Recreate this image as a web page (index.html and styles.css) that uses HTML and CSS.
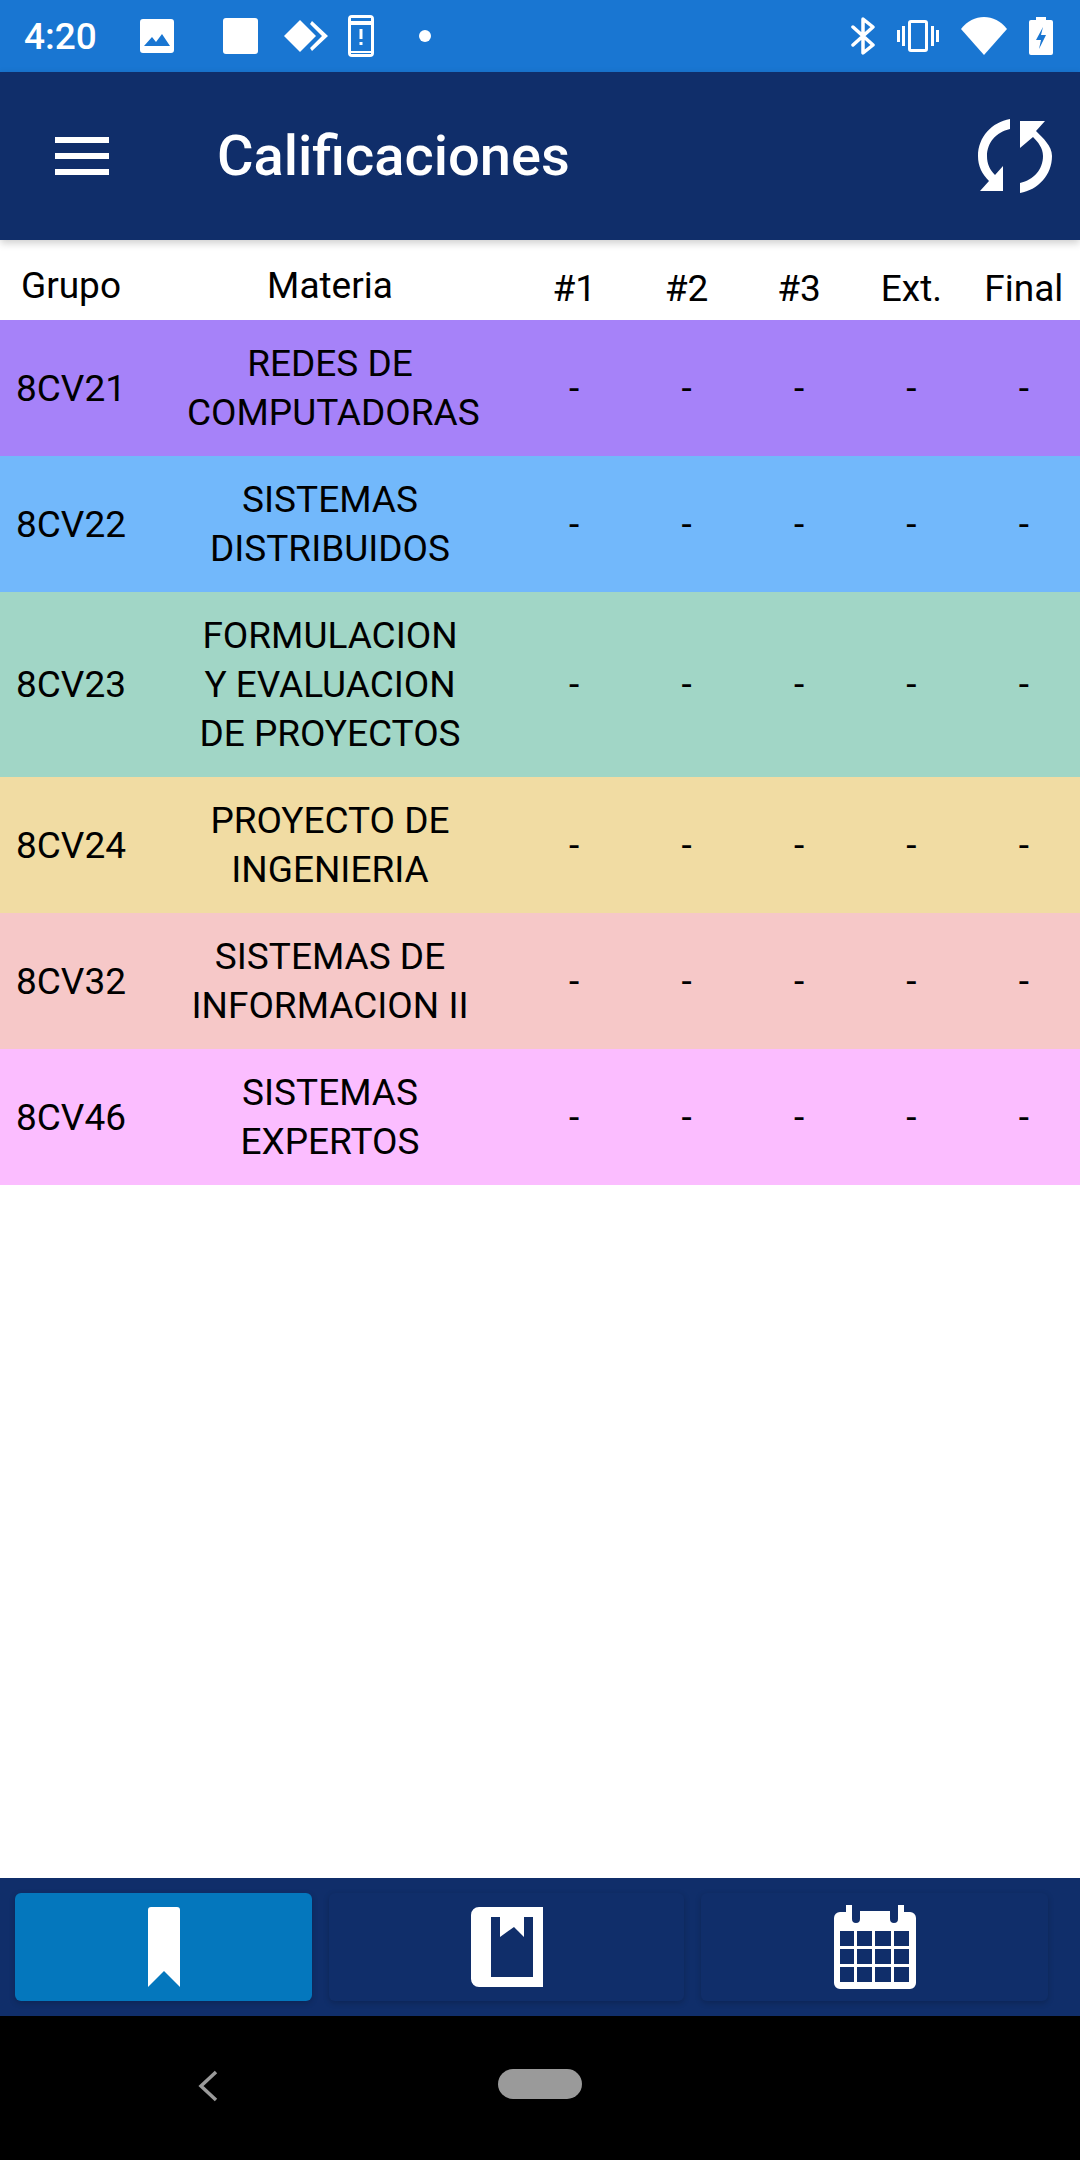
FILE: index.html
```html
<!DOCTYPE html>
<html lang="es">
<head>
  <meta charset="UTF-8">
  <meta name="viewport" content="width=device-width, initial-scale=1.0">
  <title>Calificaciones</title>
  <link rel="stylesheet" href="styles.css">
</head>
<body>
  <div class="screen">
    <div class="status-bar">
      <div class="status-left">
        <span class="clock">4:20</span>
        <svg class="st-icon" width="34" height="34" viewBox="0 0 34 34"><path fill="#fff" fill-rule="evenodd" d="M3 0h28a3 3 0 0 1 3 3v28a3 3 0 0 1-3 3H3a3 3 0 0 1-3-3V3a3 3 0 0 1 3-3zM4 27h26l-8-12-6 8-4-5z"/></svg>
        <div class="st-square"></div>
        <svg class="st-icon" width="44" height="32" viewBox="0 0 44 32"><path fill="#fff" d="M16 0l16 16-16 16L0 16zM28 1l16 15-16 15-2-3 12-12L26 4z"/></svg>
        <svg class="st-icon" width="26" height="42" viewBox="0 0 26 42"><path fill="#fff" fill-rule="evenodd" d="M4 0h18a4 4 0 0 1 4 4v34a4 4 0 0 1-4 4H4a4 4 0 0 1-4-4V4a4 4 0 0 1 4-4zM3 6h20V3H3zM3 36h20V10H3zM3 39h20v-1H3zM11.500 14h3v10h-3zM11.500 27h3v3h-3z"/></svg>
        <div class="st-dot"></div>
      </div>
      <div class="status-right">
        <svg width="24" height="38" viewBox="0 0 24 38"><path fill="none" stroke="#fff" stroke-width="3.500" stroke-linejoin="round" stroke-linecap="round" d="M2 10l20 18-10 8V2l10 8L2 28"/></svg>
        <svg width="42" height="32" viewBox="0 0 42 32"><path fill="#fff" fill-rule="evenodd" d="M14 0h14a3 3 0 0 1 3 3v26a3 3 0 0 1-3 3H14a3 3 0 0 1-3-3V3a3 3 0 0 1 3-3zM14 3v26h14V3zM5 6h3v20H5zM34 6h3v20h-3zM0 10h3v12H0zM39 10h3v12h-3z"/></svg>
        <svg width="46" height="38" viewBox="0 0 46 38"><path fill="#fff" d="M0 12C12-4 34-4 46 12L23 38z"/></svg>
        <svg width="24" height="38" viewBox="0 0 24 38"><path fill="#fff" fill-rule="evenodd" d="M7 0h10v3h5a2 2 0 0 1 2 2v31a2 2 0 0 1-2 2H2a2 2 0 0 1-2-2V5a2 2 0 0 1 2-2h5zM14 10l-7 13h5l-2 9 7-14h-5z"/></svg>
      </div>
    </div>

    <header class="app-bar">
      <div class="burger"><span></span><span></span><span></span></div>
      <h1 class="app-title">Calificaciones</h1>
      <svg class="sync" width="74" height="74" viewBox="0 0 74 74"><path fill="#fff" d="M32 0v10C18 13 9 24 9 37c0 8 3 14 8 19l8-9v25H2l9-10C4 55 0 47 0 37 0 18 14 3 32 0zM42 2h25l-9 10c7 7 16 15 16 25 0 19-14 34-32 37V64c14-3 23-14 23-27 0-8-5-14-10-19l-13 11z"/></svg>
    </header>

    <main class="grades">
      <div class="grade-row grade-head">
        <div class="col-group">Grupo</div>
        <div class="col-subject">Materia</div>
        <div class="col-num head-num">#1</div>
        <div class="col-num head-num">#2</div>
        <div class="col-num head-num">#3</div>
        <div class="col-num head-num">Ext.</div>
        <div class="col-num head-num">Final</div>
      </div>

      <div class="grade-row row-purple">
        <div class="col-group">8CV21</div>
        <div class="col-subject">REDES DE COMPUTADORAS</div>
        <div class="col-num">-</div><div class="col-num">-</div><div class="col-num">-</div><div class="col-num">-</div><div class="col-num">-</div>
      </div>
      <div class="grade-row row-blue">
        <div class="col-group">8CV22</div>
        <div class="col-subject">SISTEMAS DISTRIBUIDOS</div>
        <div class="col-num">-</div><div class="col-num">-</div><div class="col-num">-</div><div class="col-num">-</div><div class="col-num">-</div>
      </div>
      <div class="grade-row row-green">
        <div class="col-group">8CV23</div>
        <div class="col-subject">FORMULACION Y EVALUACION DE PROYECTOS</div>
        <div class="col-num">-</div><div class="col-num">-</div><div class="col-num">-</div><div class="col-num">-</div><div class="col-num">-</div>
      </div>
      <div class="grade-row row-yellow">
        <div class="col-group">8CV24</div>
        <div class="col-subject">PROYECTO DE INGENIERIA</div>
        <div class="col-num">-</div><div class="col-num">-</div><div class="col-num">-</div><div class="col-num">-</div><div class="col-num">-</div>
      </div>
      <div class="grade-row row-pink">
        <div class="col-group">8CV32</div>
        <div class="col-subject">SISTEMAS DE INFORMACION II</div>
        <div class="col-num">-</div><div class="col-num">-</div><div class="col-num">-</div><div class="col-num">-</div><div class="col-num">-</div>
      </div>
      <div class="grade-row row-magenta">
        <div class="col-group">8CV46</div>
        <div class="col-subject">SISTEMAS EXPERTOS</div>
        <div class="col-num">-</div><div class="col-num">-</div><div class="col-num">-</div><div class="col-num">-</div><div class="col-num">-</div>
      </div>
    </main>

    <nav class="tabs">
      <div class="tab tab-active">
        <svg width="32" height="80" viewBox="0 0 32 80"><path fill="#fff" d="M3 0h26a3 3 0 0 1 3 3v77L16 64 0 80V3a3 3 0 0 1 3-3z"/></svg>
      </div>
      <div class="tab tab-mid">
        <svg width="72" height="80" viewBox="0 0 72 80"><path fill="#fff" fill-rule="evenodd" d="M8 0h64v80H8a8 8 0 0 1-8-8V8a8 8 0 0 1 8-8zM20 10v60h42V10h-9v20L43 20 29 30V10z"/></svg>
      </div>
      <div class="tab">
        <svg width="82" height="84" viewBox="0 0 82 84"><path fill="#fff" fill-rule="evenodd" d="M12 0h6v14a4 4 0 0 0 4 4h0a4 4 0 0 0 4-4V0h0v6h30V0h0v14a4 4 0 0 0 4 4h0a4 4 0 0 0 4-4V0h6v7h6a6 6 0 0 1 6 6v65a6 6 0 0 1-6 6H6a6 6 0 0 1-6-6V13a6 6 0 0 1 6-6h6zM6 26v15h14V26zM23 26v15h15V26zM41 26v15h16V26zM60 26v15h15V26zM6 44v15h14V44zM23 44v15h15V44zM41 44v15h16V44zM60 44v15h15V44zM6 62v15h14V62zM23 62v15h15V62zM41 62v15h16V62zM60 62v15h15V62z"/></svg>
      </div>
    </nav>

    <div class="nav-bar">
      <svg class="nav-back" width="20" height="32" viewBox="0 0 20 32"><path fill="none" stroke="#9a9a9a" stroke-width="3.500" d="M18 2L3 16l15 14"/></svg>
      <div class="nav-home"></div>
    </div>
  </div>
</body>
</html>
```

FILE: styles.css
```css
* {
  box-sizing: border-box;
}
html, body {
  margin: 0;
  padding: 0;
}
.screen {
  display: flex;
  flex-direction: column;
  width: 1080px;
  height: 2160px;
  overflow: hidden;
  background-color: #fff;
  font-family: Roboto, "Liberation Sans", sans-serif;
  color: #000;
}

/* barra de estado */
.status-bar {
  display: flex;
  justify-content: space-between;
  align-items: center;
  height: 72px;
  padding: 0 27px 0 24px;
  background-color: #1976d2;
  color: #fff;
}
.status-left, .status-right {
  display: flex;
  align-items: center;
}
.clock {
  width: 116px;
  font-size: 37px;
  font-weight: 500;
}
.status-left .st-icon {
  margin-right: 20px;
}
.st-square {
  width: 35px;
  height: 36px;
  margin: 0 26px 0 29px;
  border-radius: 3px;
  background-color: #fff;
}
.st-dot {
  width: 12px;
  height: 12px;
  margin-left: 25px;
  border-radius: 50%;
  background-color: #fff;
}
.status-right {
  gap: 22px;
}

/* barra superior */
.app-bar {
  position: relative;
  z-index: 1;
  display: flex;
  align-items: center;
  height: 168px;
  padding: 0 28px 0 55px;
  background-color: #102e6a;
  box-shadow: 0 3px 8px rgba(0,0,0,0.2);
}
.burger {
  display: flex;
  flex-direction: column;
  gap: 10px;
  width: 54px;
  margin-right: 108px;
}
.burger span {
  display: block;
  height: 6px;
  background-color: #fff;
}
.app-title {
  flex: 1;
  margin: 0;
  color: #fff;
  font-size: 56px;
  font-weight: 500;
}

/* tabla */
.grades {
  flex: 1;
}
.grade-row {
  display: grid;
  grid-template-columns: 142px 376px repeat(5, 1fr);
  align-items: center;
  padding: 19px 0;
  font-size: 37px;
  line-height: 49px;
  text-align: center;
}
.grade-head {
  height: 80px;
  padding: 11px 0 0;
}
.head-num {
  padding-top: 6px;
}
.col-subject {
  padding: 0 45px;
}
.row-purple { background-color: #a682f9; }
.row-blue { background-color: #72b8fb; }
.row-green { background-color: #a1d6c6; }
.row-yellow { background-color: #f1dca3; }
.row-pink { background-color: #f6c8c8; }
.row-magenta { background-color: #fbbdff; }

/* pestañas */
.tabs {
  display: grid;
  grid-template-columns: 297px 355px 347px;
  gap: 17px;
  height: 138px;
  padding: 15px;
  background-color: #102e6a;
}
.tab {
  display: flex;
  justify-content: center;
  align-items: center;
  border-radius: 6px;
  box-shadow: 0 2px 6px rgba(0,0,0,0.2);
}
.tab-active {
  background-color: #0477bd;
}

/* navegacion */
.nav-bar {
  position: relative;
  height: 144px;
  background-color: #000;
}
.nav-back {
  position: absolute;
  left: 198px;
  top: 54px;
}
.nav-home {
  position: absolute;
  left: 498px;
  top: 53px;
  width: 84px;
  height: 30px;
  border-radius: 15px;
  background-color: #9a9a9a;
}
```
